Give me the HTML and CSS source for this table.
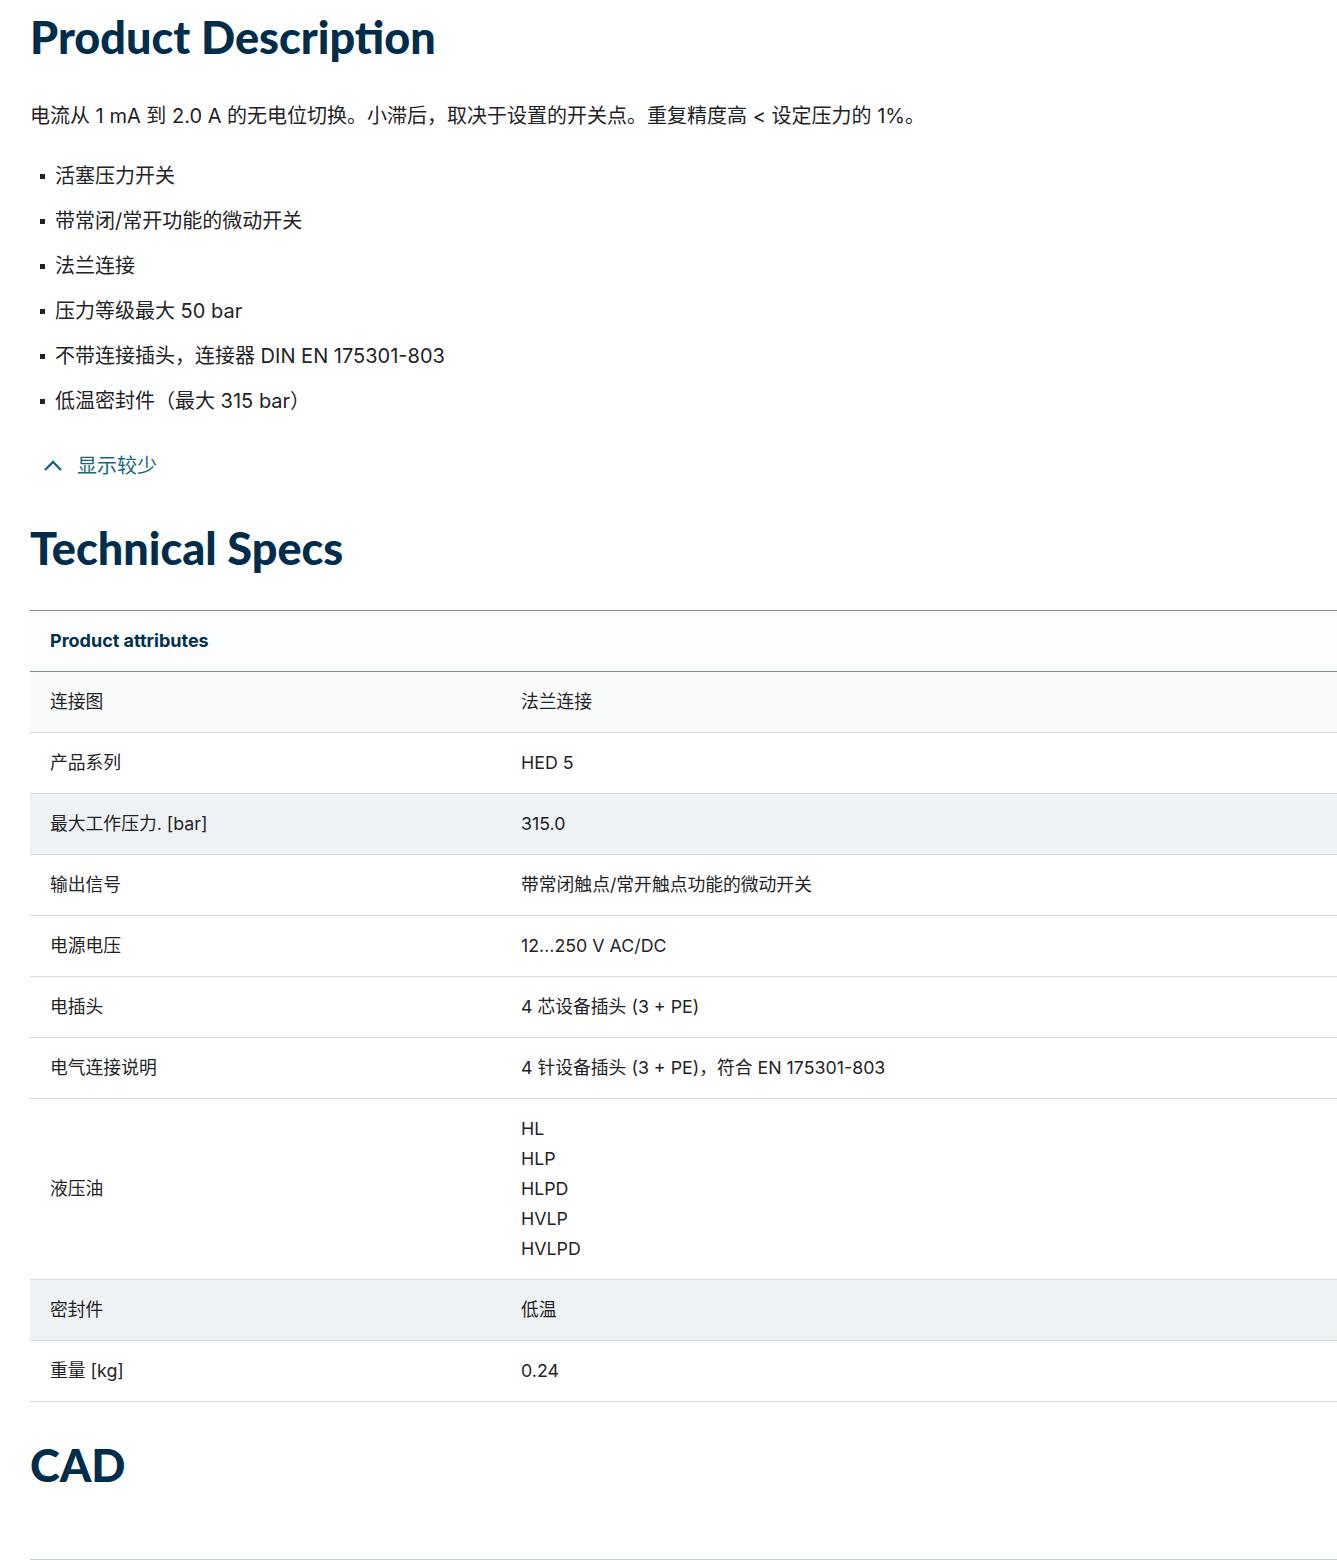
FILE: index.html
```html
<!DOCTYPE html>
<html lang="zh-CN">
<head>
<meta charset="utf-8">
<title>Product Description</title>
<link rel="stylesheet" href="styles.css">
</head>
<body>
<main class="page">
  <section class="desc">
    <h1 class="title">Product Description</h1>
    <p class="lead">电流从 1 mA 到 2.0 A 的无电位切换。小滞后，取决于设置的开关点。重复精度高 &lt; 设定压力的 1%。</p>
    <ul class="bullets">
      <li>活塞压力开关</li>
      <li>带常闭/常开功能的微动开关</li>
      <li>法兰连接</li>
      <li>压力等级最大 50 bar</li>
      <li>不带连接插头，连接器 DIN EN 175301-803</li>
      <li>低温密封件（最大 315 bar）</li>
    </ul>
    <a class="toggle" href="#">
      <svg class="chev" width="20" height="12" viewBox="0 0 20 12"><path d="M2 10 L10 2 L18 10" fill="none" stroke="currentColor" stroke-width="2.4"/></svg>
      <span>显示较少</span>
    </a>
  </section>

  <section class="specs">
    <h2 class="title">Technical Specs</h2>
    <div class="table">
      <div class="row head"><div class="cell">Product attributes</div></div>
      <div class="row tint-light"><div class="cell">连接图</div><div class="cell">法兰连接</div></div>
      <div class="row"><div class="cell">产品系列</div><div class="cell">HED 5</div></div>
      <div class="row tint"><div class="cell">最大工作压力. [bar]</div><div class="cell">315.0</div></div>
      <div class="row"><div class="cell">输出信号</div><div class="cell">带常闭触点/常开触点功能的微动开关</div></div>
      <div class="row"><div class="cell">电源电压</div><div class="cell">12...250 V AC/DC</div></div>
      <div class="row"><div class="cell">电插头</div><div class="cell">4 芯设备插头 (3 + PE)</div></div>
      <div class="row"><div class="cell">电气连接说明</div><div class="cell">4 针设备插头 (3 + PE)，符合 EN 175301-803</div></div>
      <div class="row multi"><div class="cell">液压油</div><div class="cell">HL<br>HLP<br>HLPD<br>HVLP<br>HVLPD</div></div>
      <div class="row tint"><div class="cell">密封件</div><div class="cell">低温</div></div>
      <div class="row"><div class="cell">重量 [kg]</div><div class="cell">0.24</div></div>
    </div>
  </section>

  <section class="cad">
    <h2 class="title">CAD</h2>
    <div class="cad-rule"></div>
  </section>
</main>
</body>
</html>
```

FILE: styles.css
```css
* { box-sizing: border-box; }
html, body { margin: 0; padding: 0; background: #fff; }
body {
  font-family: "Inter", "Noto Sans CJK SC", sans-serif;
  color: #1f2326;
  font-size: 20px;
}
.page { padding-left: 30px; }
.title {
  font-family: "Lato", "Noto Sans CJK SC", sans-serif;
  font-weight: 900;
  color: #002d4c;
  font-size: 45px;
  line-height: 50px;
  margin: 0;
}
.desc .title { padding-top: 12px; }
.lead { margin: 39px 0 0; line-height: 30px; }
.bullets { list-style: none; margin: 30px 0 0; padding: 0; }
.bullets li {
  position: relative;
  padding-left: 25px;
  line-height: 30px;
  margin-bottom: 15px;
}
.bullets li::before {
  content: "";
  position: absolute;
  left: 10px;
  top: 13px;
  width: 5px;
  height: 5px;
  background: #1f2326;
}
.toggle {
  display: inline-flex;
  align-items: center;
  gap: 14px;
  margin: 20px 0 0 13px;
  color: #18677d;
  text-decoration: none;
  line-height: 30px;
}
.chev { display: block; }
.specs { margin-top: 42px; }
.table { margin-top: 37px; font-size: 17.8px; }
.row {
  display: grid;
  grid-template-columns: 471px 1fr;
  align-items: center;
  border-bottom: 1px solid #d4d9dd;
}
.cell { padding: 15px 20px 15px 20px; line-height: 30px; }
.row.head {
  display: block;
  border-top: 1px solid #7e8c96;
  border-bottom: 1px solid #7e8c96;
  background: #fcfdfe;
}
.row.head .cell { font-weight: 700; font-size: 18px; color: #00304f; }
.tint-light { background: #f9fbfb; }
.tint { background: #eef2f5; }
.cad { margin-top: 38px; }
.cad-rule { margin-top: 69px; border-top: 1px solid #c9d3da; }
```
